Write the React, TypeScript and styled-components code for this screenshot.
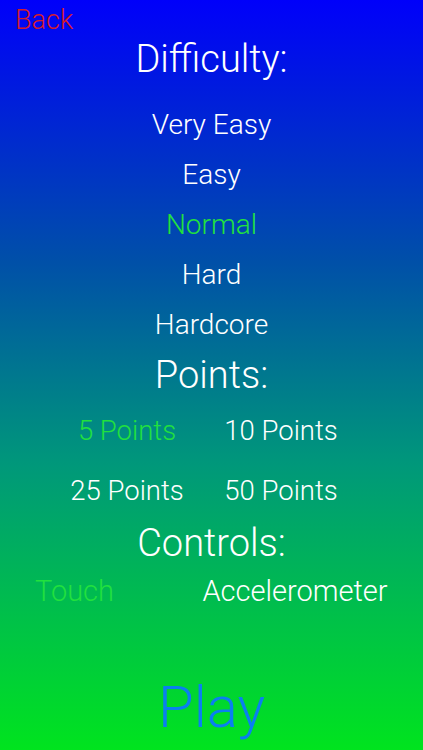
import React, { useState } from "react";
import styled, { createGlobalStyle } from "styled-components";

const Global = createGlobalStyle`
  html, body { margin: 0; padding: 0; }
  body { font-family: "Roboto", "Liberation Sans", sans-serif; }
`;

const Screen = styled.div`
  width: 423px;
  height: 750px;
  display: flex;
  flex-direction: column;
  background: linear-gradient(180deg, #0000fa 0%, #0050a8 35%, #00987a 62%, #00e41e 100%);
  font-family: "Roboto", "Liberation Sans", sans-serif;
  font-weight: 300;
  color: #ffffff;
  overflow: hidden;
`;

const TopBar = styled.div`
  height: 40px;
  display: flex;
  align-items: center;
  padding-left: 15px;
`;

const BackButton = styled.span`
  color: #d41c2c;
  font-size: 27px;
  line-height: 40px;
  cursor: pointer;
`;

const Title = styled.div<{ $h: number; $after?: number }>`
  height: ${(p) => p.$h}px;
  line-height: ${(p) => p.$h}px;
  margin-bottom: ${(p) => p.$after ?? 0}px;
  text-align: center;
  font-size: 38px;
`;

const Option = styled.div<{ $active?: boolean }>`
  height: 50px;
  line-height: 50px;
  text-align: center;
  font-size: 28px;
  color: ${(p) => (p.$active ? "#22e03e" : "#ffffff")};
  cursor: pointer;
`;

const PointsGrid = styled.div`
  display: grid;
  grid-template-columns: 154px 154px;
  grid-auto-rows: 60px;
  padding-left: 50px;
`;

const ControlsRow = styled.div`
  display: grid;
  grid-template-columns: 149px 256px;
  column-gap: 18px;
  height: 50px;
`;

const Cell = styled.div<{ $active?: boolean; $size: number }>`
  display: flex;
  align-items: center;
  justify-content: center;
  font-size: ${(p) => p.$size}px;
  color: ${(p) => (p.$active ? "#22e03e" : "#ffffff")};
  white-space: nowrap;
  cursor: pointer;
`;

const Spacer = styled.div`
  flex: 1;
`;

const PlayButton = styled.div`
  height: 70px;
  line-height: 70px;
  margin-bottom: 8px;
  text-align: center;
  font-size: 58px;
  color: #0a7ff0;
  cursor: pointer;
`;

const difficulties = ["Very Easy", "Easy", "Normal", "Hard", "Hardcore"];
const points = ["5 Points", "10 Points", "25 Points", "50 Points"];
const controls = ["Touch", "Accelerometer"];

export default function App() {
  const [diff, setDiff] = useState("Normal");
  const [pts, setPts] = useState("5 Points");
  const [ctrl, setCtrl] = useState("Touch");
  return (
    <>
      <Global />
      <Screen>
        <TopBar>
          <BackButton>Back</BackButton>
        </TopBar>
        <Title $h={38} $after={22}>Difficulty:</Title>
        {difficulties.map((d) => (
          <Option key={d} $active={d === diff} onClick={() => setDiff(d)}>
            {d}
          </Option>
        ))}
        <Title $h={50}>Points:</Title>
        <PointsGrid>
          {points.map((p) => (
            <Cell key={p} $size={27.5} $active={p === pts} onClick={() => setPts(p)}>
              {p}
            </Cell>
          ))}
        </PointsGrid>
        <Title $h={46}>Controls:</Title>
        <ControlsRow>
          {controls.map((c) => (
            <Cell key={c} $size={29} $active={c === ctrl} onClick={() => setCtrl(c)}>
              {c}
            </Cell>
          ))}
        </ControlsRow>
        <Spacer />
        <PlayButton>Play</PlayButton>
      </Screen>
    </>
  );
}
